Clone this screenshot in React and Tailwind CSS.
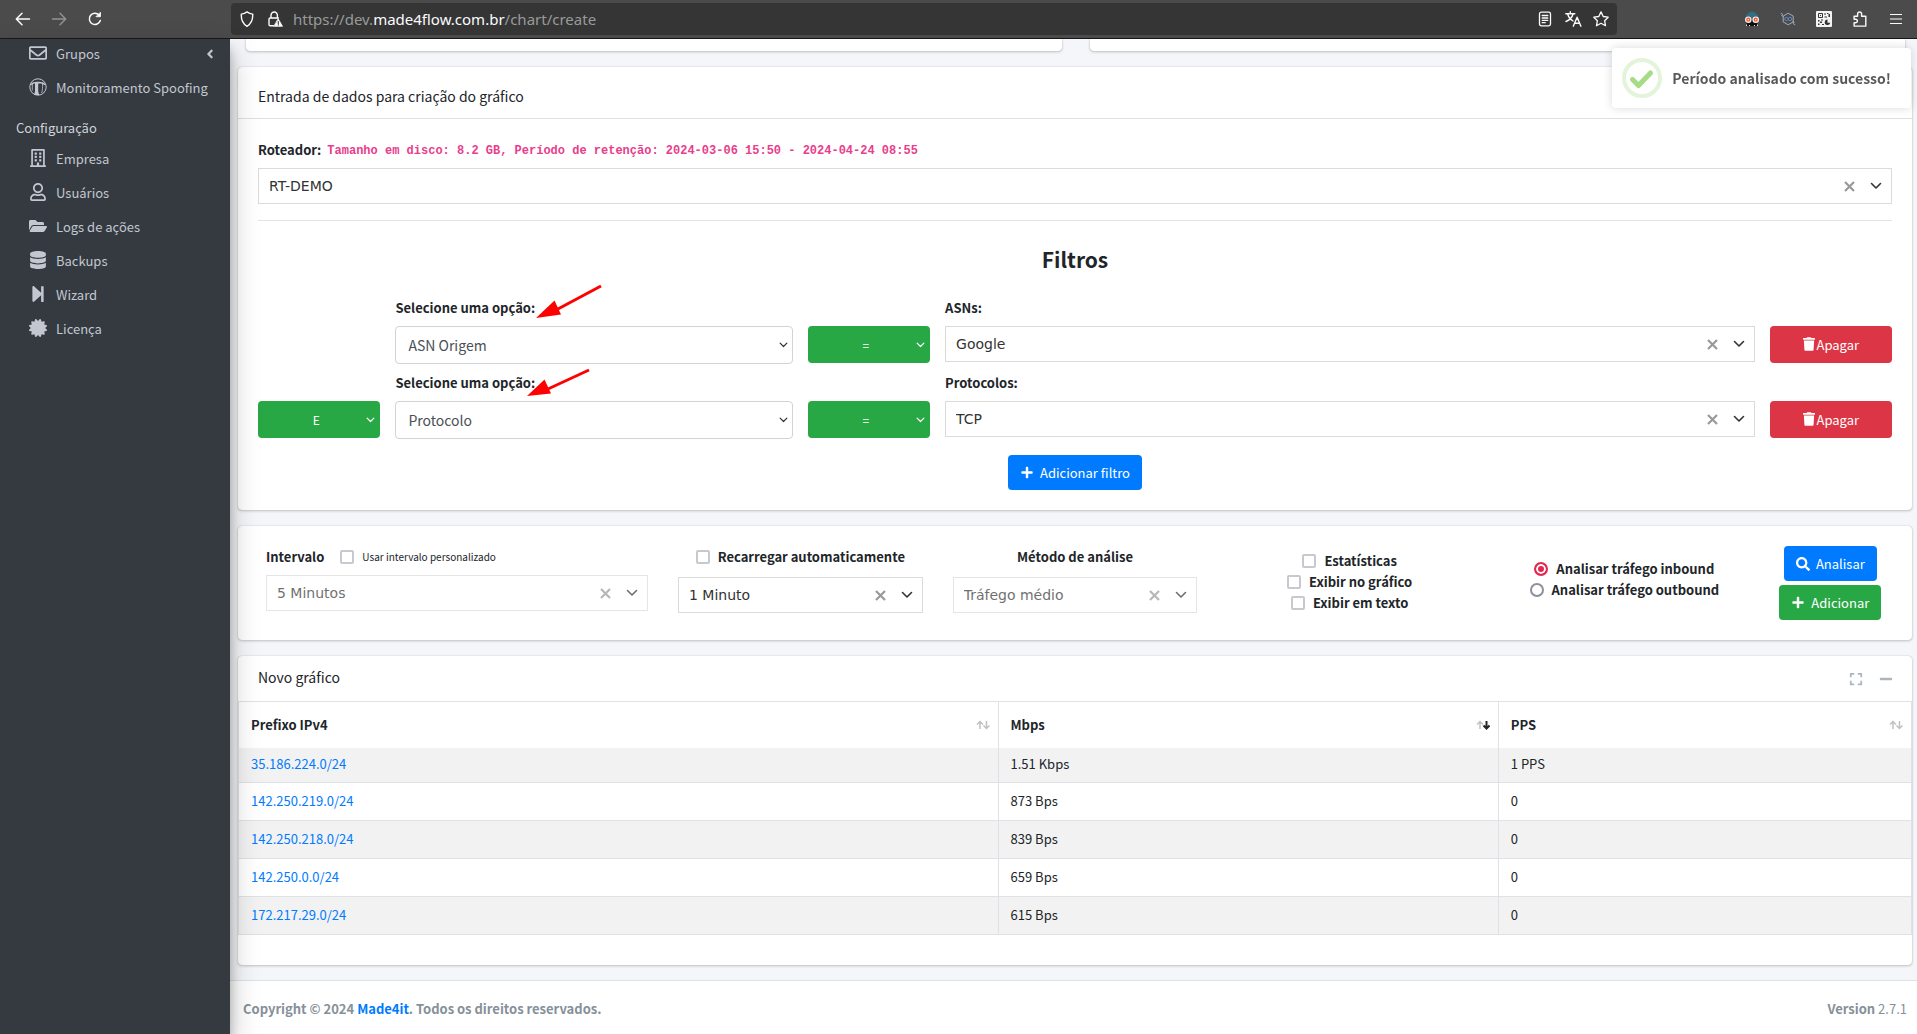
import {
  FaRegEnvelope, FaRegBuilding, FaRegUser, FaFolderOpen, FaDatabase, FaStepForward,
  FaCertificate, FaTrash, FaPlus, FaSearch, FaExpand, FaMinus, FaAngleLeft,
} from "react-icons/fa";

/* ---------- Browser toolbar ---------- */

const stroke = { fill: "none", stroke: "currentColor", strokeLinecap: "round", strokeLinejoin: "round" };

function ToolButton({ label, className = "", children }) {
  return (
    <button type="button" aria-label={label} className={`flex h-5 w-5 items-center justify-center text-[#fbfbfe] ${className}`}>
      {children}
    </button>
  );
}

function ArrowIcon({ flip }) {
  return (
    <svg viewBox="0 0 16 16" className={flip ? "h-4 w-4 rotate-180" : "h-4 w-4"} {...stroke} strokeWidth="1.5">
      <path d="M14.5 8H1.5M7 2.3 1.3 8 7 13.7" />
    </svg>
  );
}

function ReloadIcon() {
  return (
    <svg viewBox="0 0 16 16" className="h-4 w-4" {...stroke} strokeWidth="1.5">
      <path d="M13.300 9.500A5.600 5.600 0 1 1 12 4" />
      <path d="M13.500 1.500v4.200H9.300z" fill="currentColor" strokeWidth="0.8" />
    </svg>
  );
}

function ShieldIcon() {
  return (
    <svg viewBox="0 0 16 16" className="h-4 w-4" {...stroke} strokeWidth="1.4">
      <path d="M8 .9c1.800 1.400 3.600 2 5.700 2.200.3 5.400-1 9.400-5.700 12.200C3.300 12.500 2 8.500 2.300 3.100 4.400 2.900 6.200 2.300 8 .9z" />
    </svg>
  );
}

function LockWarningIcon() {
  return (
    <svg viewBox="0 0 16 16" className="h-4 w-4" {...stroke} strokeWidth="1.4">
      <path d="M4 7V4.200a3.200 3.200 0 0 1 6.400 0V7M6.500 14.800H3.200A1.200 1.200 0 0 1 2 13.600V8.200A1.200 1.200 0 0 1 3.200 7h8.200" />
      <path d="m11.300 8 4.200 7.300H7.100z" fill="currentColor" strokeWidth="0.800" />
      <path d="M11.300 10.500v2.200M11.300 13.900v.2" stroke="#353535" strokeWidth="1.100" />
    </svg>
  );
}

function ReaderIcon() {
  return (
    <svg viewBox="0 0 16 16" className="h-4 w-4" {...stroke} strokeWidth="1.3">
      <rect x="2.500" y="1.200" width="11" height="13.600" rx="1.800" />
      <path d="M5.200 4.500h5.600M5.200 7h5.600M5.200 9.300h5.600M5.200 11.700h3" />
    </svg>
  );
}

function TranslateIcon() {
  return (
    <svg viewBox="0 0 17 16" className="h-4 w-[17px]" {...stroke} strokeWidth="1.400">
      <path d="M.8 2.800h9M5.300.8v2M8 3C7.200 6.300 4.500 9 1 10.500M2.700 3c.8 3 2.800 5.600 5.300 7" />
      <path d="m8.300 15.200 3.800-9 3.800 9M9.600 12.300h5" />
    </svg>
  );
}

function StarIcon() {
  return (
    <svg viewBox="0 0 16 16" className="h-4 w-4" {...stroke} strokeWidth="1.300">
      <path d="m8 .9 2.200 4.600 5 .7-3.600 3.500.9 5L8 12.300l-4.500 2.400.9-5L.8 6.200l5-.7z" />
    </svg>
  );
}

function SpyIcon() {
  return (
    <svg viewBox="0 0 16 16" className="h-4 w-4">
      <path d="M1.500 7C2 3 5 .8 8 .8S14 3 14.500 7z" fill="#2f6f85" />
      <path d="M3.500 9h9l1.500 6H2z" fill="#0d0f12" />
      <circle cx="4.300" cy="8.700" r="2.700" fill="#f05b3c" stroke="#f4f1ee" strokeWidth="1.200" />
      <circle cx="11.700" cy="8.700" r="2.700" fill="#f05b3c" stroke="#f4f1ee" strokeWidth="1.200" />
      <circle cx="4.300" cy="8.700" r=".7" fill="#fff" />
      <circle cx="11.700" cy="8.700" r=".7" fill="#fff" />
      <path d="M2.500 13.500v1.500M5.500 14v1M10.500 14v1M13.500 13.500v1.500" stroke="#e8e8e8" />
    </svg>
  );
}

function HexagonIcon() {
  return (
    <svg viewBox="0 0 16 16" className="h-4 w-4" fill="none" stroke="#a3adb8" strokeWidth="1">
      <path d="m8.200 2.200 5 2.900v5.800l-5 2.900-5-2.900V5.100z" />
      <path d="M.8 2.500c1.500-.6 2.300 1 1.300 2M15.200 13.500c-1.500.6-2.300-1-1.300-2M1.500 4l2 2M14.500 12l-2-2" />
      <circle cx="6.400" cy="8" r="1.700" stroke="#5b86c4" />
      <circle cx="10" cy="8" r="1.700" stroke="#5b86c4" />
    </svg>
  );
}

function QrIcon() {
  return (
    <svg viewBox="0 0 16 16" className="h-4 w-4">
      <rect width="16" height="16" rx="1" fill="#f3f3f3" />
      <path d="M2.500 2.500h4v4h-4z" fill="none" stroke="#333" />
      <path d="M4 4h1v1H4zM8.500 2h1v2h-1zM11 2h1.500v1H11zM12.500 3H14v3h-1.500zM8.500 5.500H11v1H8.500zM2 9h1.500v1.500H2zM5 8.500h2v1H5zM4 10.500h2V12H4zM2 12.500h1.500V14H2zM6 13h2v1H6z" fill="#333" />
      <path d="M11.500 8.500a2.800 2.800 0 1 0 2.800 3.300h-2.800z" fill="#333" />
    </svg>
  );
}

function PuzzleIcon() {
  return (
    <svg viewBox="0 0 16 16" className="h-4 w-4" {...stroke} strokeWidth="1.400">
      <path d="M2.100 5.300h3.500V3a2 2 0 0 1 4 0v2.300h4.200v9.800H2.100v-3.300h1.500a1.800 1.800 0 0 0 0-3.600H2.100z" />
    </svg>
  );
}

function MenuIcon() {
  return (
    <svg viewBox="0 0 12 12" className="h-3 w-3" {...stroke} strokeWidth="1.200">
      <path d="M.5 1.500h11M.5 6h11M.5 10.500h11" />
    </svg>
  );
}

function BrowserBar() {
  return (
    <header className="flex h-[39px] shrink-0 items-center border-b border-[#18181b] bg-[#4b4b4b] pr-[11px] pl-[13px]">
      <nav className="flex w-[218px] shrink-0 gap-4">
        <ToolButton label="Voltar"><ArrowIcon /></ToolButton>
        <ToolButton label="Avançar" className="opacity-40"><ArrowIcon flip /></ToolButton>
        <ToolButton label="Recarregar"><ReloadIcon /></ToolButton>
      </nav>
      <div className="flex h-8 min-w-0 flex-1 items-center rounded bg-[#353535] px-1.5">
        <ToolButton label="Proteção"><ShieldIcon /></ToolButton>
        <ToolButton label="Conexão não segura" className="ml-2"><LockWarningIcon /></ToolButton>
        <p className="ml-2 flex-1 truncate font-['Noto_Sans'] text-[15px] leading-5 text-[#9a9a9a]">
          https://dev.<span className="text-[#fbfbfe]">made4flow.com.br</span>/chart/create
        </p>
        <div className="flex gap-2">
          <ToolButton label="Modo de leitura"><ReaderIcon /></ToolButton>
          <ToolButton label="Traduzir"><TranslateIcon /></ToolButton>
          <ToolButton label="Favoritar"><StarIcon /></ToolButton>
        </div>
      </div>
      <div className="ml-[125px] flex gap-4">
        <ToolButton label="Extensão espião"><SpyIcon /></ToolButton>
        <ToolButton label="Extensão rede"><HexagonIcon /></ToolButton>
        <ToolButton label="Extensão QR"><QrIcon /></ToolButton>
        <ToolButton label="Extensões"><PuzzleIcon /></ToolButton>
        <ToolButton label="Menu"><MenuIcon /></ToolButton>
      </div>
    </header>
  );
}

/* ---------- Sidebar ---------- */

function SpoofingIcon() {
  return (
    <svg viewBox="0 0 18 18" className="h-[18px] w-[18px]" fill="none" stroke="currentColor">
      <circle cx="9" cy="9" r="8.200" strokeWidth="1" />
      <path d="M1.500 6.200C3.500 4.200 6 3.600 9 3.800c3-.2 5.500.4 7.500 2.400l-.8 1C14 5.800 12 5.400 9.500 5.600L5 5.500 2 7.200z" fill="currentColor" stroke="none" />
      <path d="M6 4.500h3.200v9l1 3.500H5l1-3.500z" fill="currentColor" stroke="none" />
      <path d="M3.300 6v6.500M13.500 6c.3 3 0 6-.8 9" strokeWidth=".8" />
    </svg>
  );
}

function SidebarItem({ icon: Icon, label, chevron }) {
  return (
    <a href="#" className="flex h-[34px] items-center pr-[15px] pl-7 text-[13px] leading-5 text-[#c2c7d0]">
      <span className="mb-0.5 flex w-5 justify-center"><Icon className="h-[18px] w-[18px]" /></span>
      <span className="ml-2 flex-1 whitespace-nowrap">{label}</span>
      {chevron && <FaAngleLeft className="h-[14px] w-[10px]" />}
    </a>
  );
}

function Sidebar() {
  return (
    <aside className="relative z-10 w-[230px] shrink-0 bg-[#343a40] shadow-[0_14px_28px_rgba(0,0,0,0.25),0_10px_10px_rgba(0,0,0,0.22)]">
      <nav className="-mt-0.5">
        <SidebarItem icon={FaRegEnvelope} label="Grupos" chevron />
        <SidebarItem icon={SpoofingIcon} label="Monitoramento Spoofing" />
        <h2 className="mt-[13px] px-4 text-[13px] leading-5 text-[#d0d4db]">Configuração</h2>
        <div className="mt-1">
          <SidebarItem icon={FaRegBuilding} label="Empresa" />
          <SidebarItem icon={FaRegUser} label="Usuários" />
          <SidebarItem icon={FaFolderOpen} label="Logs de ações" />
          <SidebarItem icon={FaDatabase} label="Backups" />
          <SidebarItem icon={FaStepForward} label="Wizard" />
          <SidebarItem icon={FaCertificate} label="Licença" />
        </div>
      </nav>
    </aside>
  );
}

/* ---------- Form parts ---------- */

function Card({ className = "", children }) {
  return (
    <section className={`rounded bg-white shadow-[0_0_1px_rgba(0,0,0,0.3),0_1px_3px_rgba(0,0,0,0.2)] ${className}`}>
      {children}
    </section>
  );
}

function Chevron({ className = "h-2 w-3" }) {
  return (
    <svg viewBox="0 0 12 8" className={className} {...stroke} strokeWidth="1.600">
      <path d="m1.500 1.500 4.500 4.500 4.500-4.500" />
    </svg>
  );
}

function SearchSelect({ id, label, value, disabled }) {
  return (
    <div className={`flex h-9 w-full items-center border border-[#dbdbdb] bg-white pr-[9px] pl-2.5 ${disabled ? "opacity-70" : ""}`}>
      <input id={id} aria-label={label} defaultValue={value} disabled={disabled}
        className="min-w-0 flex-1 bg-transparent font-['DejaVu_Sans'] text-[14px] leading-5 text-[#333] outline-none" />
      <button type="button" aria-label="Limpar" disabled={disabled} className="mr-[15px] text-[#999]">
        <svg viewBox="0 0 11 11" className="h-[11px] w-[11px]" fill="none" stroke="currentColor" strokeWidth="2.200">
          <path d="m1 1 9 9M10 1 1 10" />
        </svg>
      </button>
      <button type="button" aria-label="Abrir opções" disabled={disabled} className="text-[#333]"><Chevron /></button>
    </div>
  );
}

function OptionSelect({ id, options }) {
  return (
    <div className="relative">
      <select id={id} className="h-[38px] w-full appearance-none rounded border border-[#ced4da] bg-white px-3 text-[14px] leading-6 text-[#495057]">
        {options.map((o) => <option key={o}>{o}</option>)}
      </select>
      <Chevron className="pointer-events-none absolute top-4 right-[5px] h-1.5 w-[9px] text-[#333]" />
    </div>
  );
}

function GreenSelect({ label, options }) {
  return (
    <div className="relative">
      <select aria-label={label} className="block h-[37px] w-full appearance-none rounded bg-[#28a745] pr-3 pl-1.5 text-center text-[12px] leading-5 text-white">
        {options.map((o) => <option key={o}>{o}</option>)}
      </select>
      <Chevron className="pointer-events-none absolute top-4 right-[5px] h-1.5 w-[9px] text-white" />
    </div>
  );
}

function Annotation({ className, d, head }) {
  return (
    <svg viewBox="0 0 70 40" className={`pointer-events-none absolute h-10 w-[70px] text-[#ff0000] ${className}`} fill="currentColor">
      <path d={d} stroke="currentColor" strokeWidth="3" />
      <path d={head} />
    </svg>
  );
}

function FilterRow({ id, joiner, option, options, valueLabel, value, arrow }) {
  return (
    <div className="grid grid-cols-12 items-start gap-x-[15px]">
      <div className="col-span-1 pt-7">
        {joiner && <GreenSelect label="Operador lógico" options={["E", "OU"]} />}
      </div>
      <div className="relative col-span-3">
        <label htmlFor={`${id}-option`} className="block h-7 text-[13px] leading-5 font-bold">Selecione uma opção:</label>
        <OptionSelect id={`${id}-option`} options={[option, ...options]} />
        {arrow}
      </div>
      <div className="col-span-1 pt-7">
        <GreenSelect label="Comparador" options={["=", "!="]} />
      </div>
      <div className="col-span-6">
        <label htmlFor={`${id}-value`} className="block h-7 text-[13px] leading-5 font-bold">{valueLabel}</label>
        <SearchSelect id={`${id}-value`} value={value} />
      </div>
      <div className="col-span-1 pt-7">
        <button type="button" className="flex h-[37px] w-full items-center justify-center gap-0.5 rounded bg-[#dc3545] text-[13px] leading-5 text-white">
          <FaTrash className="mb-0.5 h-[14px] w-3" />Apagar
        </button>
      </div>
    </div>
  );
}

function Check({ id, children, small }) {
  return (
    <div className="flex items-center justify-center">
      <input id={id} type="checkbox" className="mr-2 h-3.5 w-3.5 shrink-0 appearance-none rounded-xs border-2 border-[#c8c8cf] bg-white checked:bg-[#007bff]" />
      <label htmlFor={id} className={small ? "text-[10px] leading-[21px] whitespace-nowrap" : "text-[13px] leading-[21px] font-bold whitespace-nowrap"}>{children}</label>
    </div>
  );
}

function Radio({ id, checked, children }) {
  return (
    <div className="flex items-center justify-center">
      <input id={id} type="radio" name="direction" defaultChecked={checked}
        className="mr-2 h-3.5 w-3.5 shrink-0 appearance-none rounded-full border-2 border-[#8f8f9d] bg-white checked:border-[#e22850] checked:bg-[#e22850] checked:shadow-[inset_0_0_0_2px_white]" />
      <label htmlFor={id} className="text-[13px] leading-[21px] font-bold whitespace-nowrap">{children}</label>
    </div>
  );
}

function FilterCard() {
  return (
    <Card>
      <h3 className="border-b border-[#dfdfdf] px-5 pt-[17px] pb-[10px] text-[14px] leading-6">Entrada de dados para criação do gráfico</h3>
      <div className="p-5">
        <div className="flex items-center gap-1.5 text-[13px] leading-5">
          <label htmlFor="router" className="font-bold">Roteador:</label>
          <code className="pt-0.5 font-['Liberation_Mono'] text-[12px] font-bold text-[#e83e8c]">
            Tamanho em disco: 8.2 GB, Período de retenção: 2024-03-06 15:50 - 2024-04-24 08:55
          </code>
        </div>
        <div className="mt-[7px]"><SearchSelect id="router" value="RT-DEMO" /></div>
        <hr className="mt-4 border-[#e3e3e3]" />
        <h2 className="mt-[22px] text-center text-[21px] leading-8 font-bold">Filtros</h2>
        <div className="mt-[23px] flex flex-col gap-[9px]">
          <FilterRow id="asn" option="ASN Origem" options={["ASN Destino", "Protocolo"]} valueLabel="ASNs:" value="Google"
            arrow={<Annotation className="-top-3.5 left-[141px]" d="m65 2-44 23.500" head="m0 34 18.500-17.500L25 30.500z" />} />
          <FilterRow id="protocol" joiner option="Protocolo" options={["ASN Origem"]} valueLabel="Protocolos:" value="TCP"
            arrow={<Annotation className="-top-2 left-[131px]" d="m63 5-41 19" head="m1 31 17.500-16.500L25 28.500z" />} />
        </div>
        <div className="mt-4 flex justify-center">
          <button type="button" className="flex h-[35px] items-center gap-1.5 rounded bg-[#007bff] px-3 text-[13px] leading-5 text-white">
            <FaPlus className="h-[13px] w-3.5" />Adicionar filtro
          </button>
        </div>
      </div>
    </Card>
  );
}

function OptionsCard() {
  return (
    <Card className="grid grid-cols-12 px-[13px] py-5">
      <div className="col-span-3 px-[15px]">
        <div className="flex items-center gap-4">
          <label htmlFor="interval" className="text-[13px] leading-[21px] font-bold">Intervalo</label>
          <Check id="custom-interval" small>Usar intervalo personalizado</Check>
        </div>
        <div className="mt-2"><SearchSelect id="interval" value="5 Minutos" disabled /></div>
      </div>
      <div className="col-span-2 px-[15px]">
        <Check id="auto-reload">Recarregar automaticamente</Check>
        <div className="mt-2.5"><SearchSelect label="Tempo de recarga" value="1 Minuto" /></div>
      </div>
      <div className="col-span-2 px-[15px]">
        <label htmlFor="method" className="block text-center text-[13px] leading-[21px] font-bold">Método de análise</label>
        <div className="mt-2.5"><SearchSelect id="method" value="Tráfego médio" disabled /></div>
      </div>
      <div className="col-span-2 pt-1">
        <Check id="statistics">Estatísticas</Check>
        <Check id="show-chart">Exibir no gráfico</Check>
        <Check id="show-text">Exibir em texto</Check>
      </div>
      <div className="col-span-2 pt-3">
        <Radio id="inbound" checked>Analisar tráfego inbound</Radio>
        <Radio id="outbound">Analisar tráfego outbound</Radio>
      </div>
      <div className="col-span-1 flex flex-col items-center gap-1">
        <button type="button" className="flex h-[35px] items-center gap-1.5 rounded bg-[#007bff] px-3 text-[13px] leading-5 text-white">
          <FaSearch className="h-3.5 w-3.5" />Analisar
        </button>
        <button type="button" className="flex h-[35px] items-center gap-1.5 rounded bg-[#28a745] px-3 text-[13px] leading-5 text-white">
          <FaPlus className="h-[13px] w-3.5" />Adicionar
        </button>
      </div>
    </Card>
  );
}

/* ---------- Results table ---------- */

function SortArrows({ descending }) {
  return (
    <svg viewBox="0 0 14 10" className="h-2.5 w-3.5" fill="none" strokeWidth="1.500">
      <path d="M4 9V1.500M1 4.500l3-3 3 3" stroke="#bfc1c3" />
      <path d="M10.500 1v7.500M7.500 5.500l3 3 3-3" stroke={descending ? "#212529" : "#bfc1c3"} strokeWidth={descending ? 2 : 1.5} />
    </svg>
  );
}

const rows = [
  ["35.186.224.0/24", "1.51 Kbps", "1 PPS"],
  ["142.250.219.0/24", "873 Bps", "0"],
  ["142.250.218.0/24", "839 Bps", "0"],
  ["142.250.0.0/24", "659 Bps", "0"],
  ["172.217.29.0/24", "615 Bps", "0"],
];

function Heading({ className = "", descending, children }) {
  return (
    <th scope="col" className={`border-x border-[#dee2e6] pr-2 pl-3 text-left font-bold ${className}`}>
      <div className="flex items-center justify-between">{children}<SortArrows descending={descending} /></div>
    </th>
  );
}

function ResultsCard() {
  return (
    <Card className="pb-[30px]">
      <div className="flex h-[45px] items-center justify-between pr-[19px] pl-5">
        <h3 className="pb-1 text-[14px] leading-6">Novo gráfico</h3>
        <div className="flex gap-4 text-[#adb5bd]">
          <button type="button" aria-label="Expandir"><FaExpand className="h-3.5 w-3.5" /></button>
          <button type="button" aria-label="Minimizar"><FaMinus className="h-3.5 w-3.5" /></button>
        </div>
      </div>
      <table className="w-full table-fixed border-collapse border border-[#dee2e6] text-[13px] leading-5">
        <thead>
          <tr className="h-[46px]">
            <Heading className="w-[45.4%]">Prefixo IPv4</Heading>
            <Heading className="w-[29.9%]" descending>Mbps</Heading>
            <Heading>PPS</Heading>
          </tr>
        </thead>
        <tbody>
          {rows.map(([prefix, rate, pps], i) => (
            <tr key={prefix} className={`border-b border-[#dee2e6] odd:bg-[#f2f2f2] ${i === 0 ? "h-[35px]" : "h-[38px]"}`}>
              <td className="border-x border-[#dee2e6] px-3 pb-0.5"><a href="#" className="text-[#007bff]">{prefix}</a></td>
              <td className="border-x border-[#dee2e6] px-3 pb-0.5">{rate}</td>
              <td className="border-x border-[#dee2e6] px-3 pb-0.5">{pps}</td>
            </tr>
          ))}
        </tbody>
      </table>
    </Card>
  );
}

function Toast() {
  return (
    <div role="status" className="fixed top-12 right-[6px] z-20 flex h-[60px] items-center gap-2.5 rounded bg-white pr-5 pl-2.5 shadow-[0_0_10px_rgba(0,0,0,0.15)]">
      <svg viewBox="0 0 40 40" className="h-10 w-10" fill="none">
        <circle cx="20" cy="20" r="18" stroke="#e4f4db" strokeWidth="4" />
        <path d="m10.500 21.500 6 6 12-12.500" stroke="#a5dc86" strokeWidth="5" strokeLinecap="round" strokeLinejoin="round" />
      </svg>
      <p className="text-[14px] leading-6 font-bold text-[#595959]">Período analisado com sucesso!</p>
    </div>
  );
}

export default function App() {
  return (
    <div className="flex min-h-screen flex-col font-['Noto_Sans_CJK_SC',sans-serif] text-[#212529]">
      <BrowserBar />
      <div className="flex flex-1">
        <Sidebar />
        <div className="flex min-w-0 flex-1 flex-col bg-[#f4f6f9]">
          <main className="flex flex-col gap-4 pr-[5px] pb-[15px] pl-2">
            <div className="grid grid-cols-2 gap-x-7 pr-[7px] pl-2">
              <div className="h-3 rounded-b bg-white shadow-[0_0_1px_rgba(0,0,0,0.3),0_1px_3px_rgba(0,0,0,0.2)]" />
              <div className="h-3 rounded-b bg-white shadow-[0_0_1px_rgba(0,0,0,0.3),0_1px_3px_rgba(0,0,0,0.2)]" />
            </div>
            <FilterCard />
            <OptionsCard />
            <ResultsCard />
          </main>
          <footer className="flex flex-1 items-start justify-between border-t border-[#dee2e6] bg-white pt-[18px] pr-2.5 pl-[13px] text-[13px] leading-5 text-[#869099]">
            <strong>Copyright © 2024 <a href="#" className="text-[#007bff]">Made4it</a>. Todos os direitos reservados.</strong>
            <p><b>Version</b> 2.7.1</p>
          </footer>
        </div>
      </div>
      <Toast />
    </div>
  );
}
